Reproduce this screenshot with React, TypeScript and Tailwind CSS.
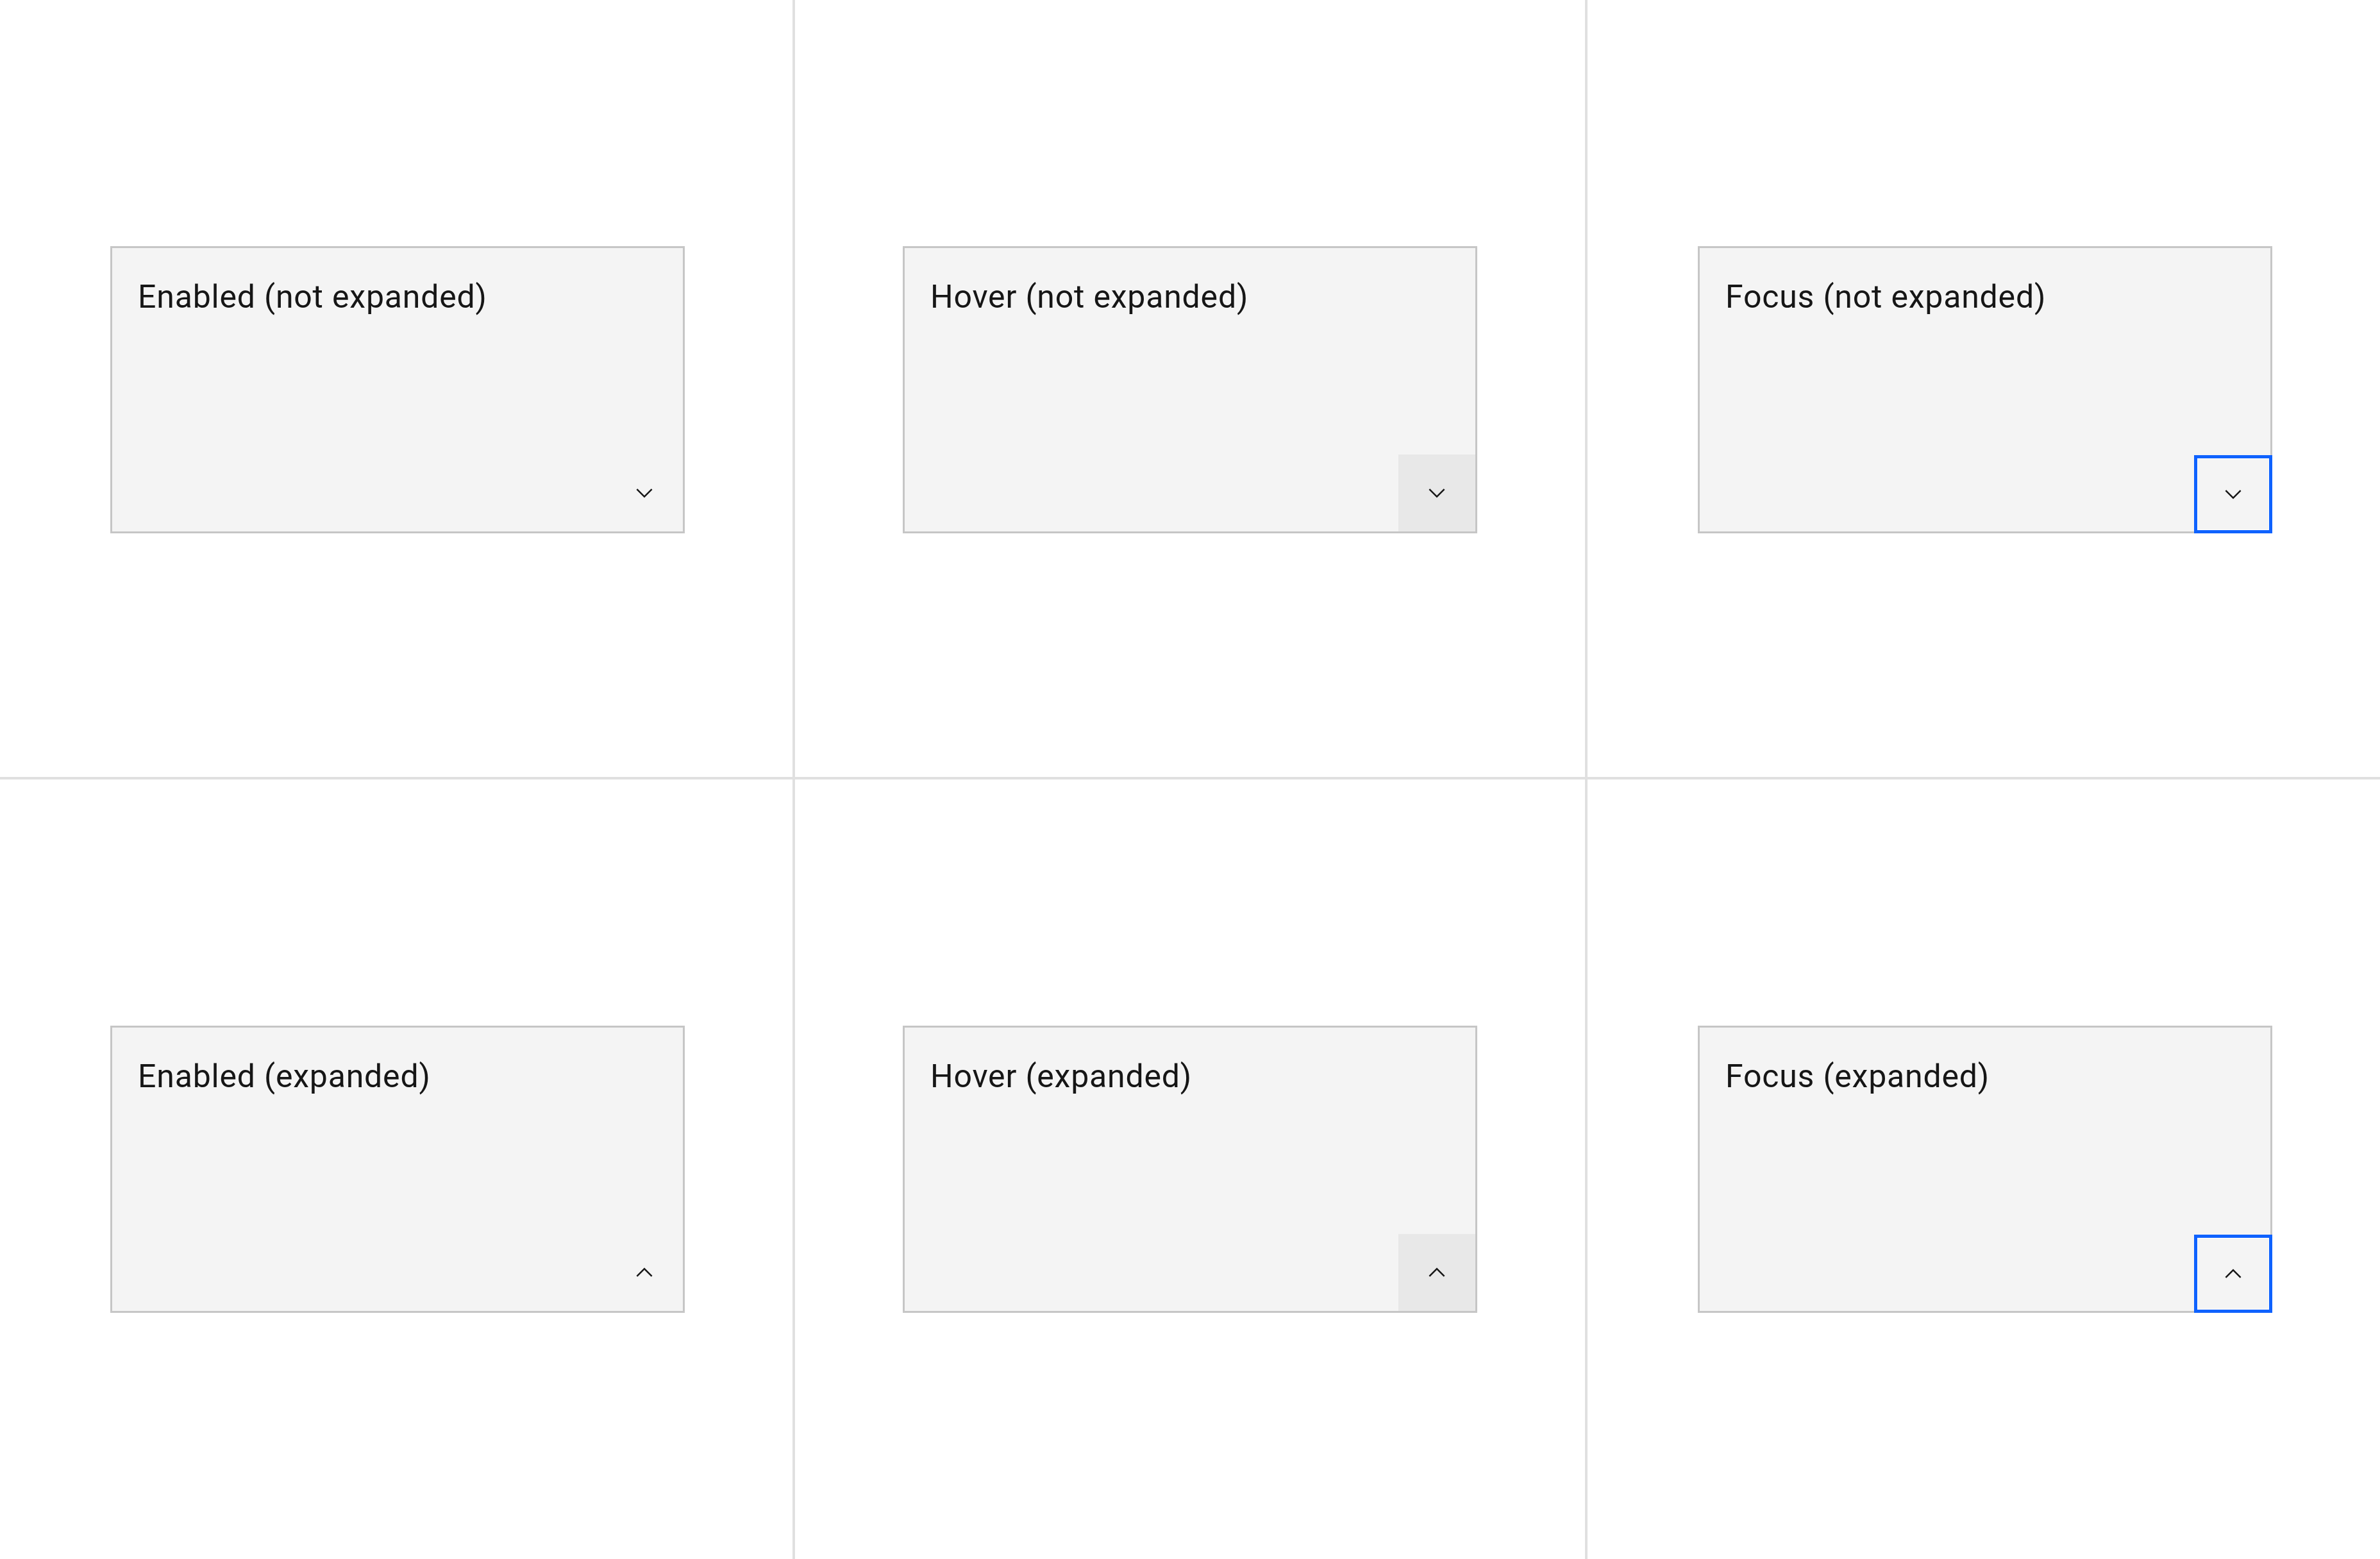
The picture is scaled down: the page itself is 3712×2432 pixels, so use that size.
import React from "react";

type State = "enabled" | "hover" | "focus";

const tiles: { label: string; state: State; expanded: boolean }[] = [
  { label: "Enabled (not expanded)", state: "enabled", expanded: false },
  { label: "Hover (not expanded)", state: "hover", expanded: false },
  { label: "Focus (not expanded)", state: "focus", expanded: false },
  { label: "Enabled (expanded)", state: "enabled", expanded: true },
  { label: "Hover (expanded)", state: "hover", expanded: true },
  { label: "Focus (expanded)", state: "focus", expanded: true },
];

function Chevron({ up }: { up: boolean }) {
  return (
    <svg width="40" height="40" viewBox="0 0 16 16" fill="#161616">
      {up ? (
        <path d="M8 5L13 10 12.3 10.7 8 6.4 3.7 10.7 3 10z" />
      ) : (
        <path d="M8 11L3 6 3.7 5.3 8 9.6 12.3 5.3 13 6z" />
      )}
    </svg>
  );
}

function Tile({ label, state, expanded }: { label: string; state: State; expanded: boolean }) {
  const btn =
    state === "focus"
      ? "w-[122px] h-[122px] -mr-[3px] -mb-[3px] border-[5px] border-[#0f62fe] shadow-[inset_0_0_0_1px_#ffffff]"
      : state === "hover"
        ? "w-[120px] h-[120px] bg-[#e8e8e8]"
        : "w-[120px] h-[120px]";
  return (
    <div className="w-[896px] h-[448px] border-[3px] border-[#c6c6c6] bg-[#f4f4f4] flex flex-col">
      <div
        className="pt-[51px] pl-[40px] text-[50px] leading-none tracking-[0.8px] text-[#161616]"
        style={{ fontFamily: "Roboto, 'Noto Sans', sans-serif" }}
      >
        {label}
      </div>
      <div className={`mt-auto self-end flex items-center justify-center ${btn}`}>
        <Chevron up={expanded} />
      </div>
    </div>
  );
}

export default function App() {
  return (
    <div className="w-[3712px] h-[2432px] bg-[#e0e0e0] grid grid-cols-[1236px_1232px_1236px] grid-rows-[1212px_1216px] gap-[4px]">
      {tiles.map((t, i) => (
        <div
          key={t.label}
          className={`bg-white flex items-center justify-center ${i % 3 === 1 ? "" : "pl-[4px]"} ${i < 3 ? "pt-[4px]" : ""}`}
        >
          <Tile {...t} />
        </div>
      ))}
    </div>
  );
}
